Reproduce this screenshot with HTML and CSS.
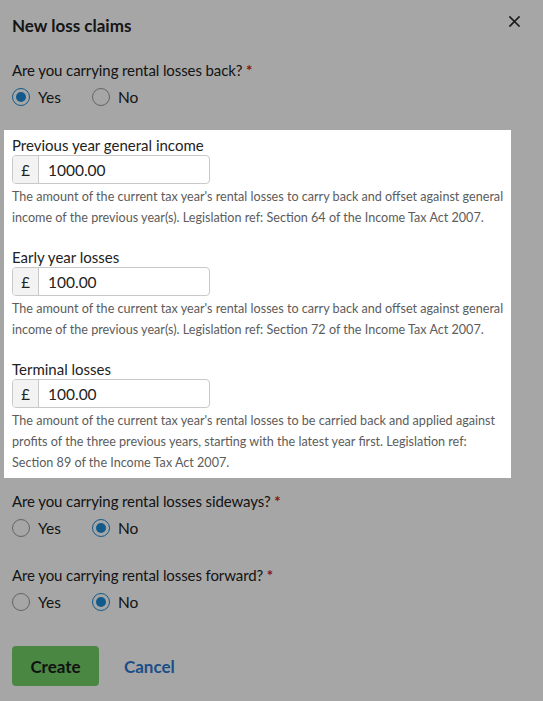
FILE: index.html
```html
<!DOCTYPE html>
<html lang="en">
<head>
<meta charset="utf-8">
<title>New loss claims</title>
<link rel="stylesheet" href="styles.css">
</head>
<body>
<div class="modal">
  <div class="modal-header">
    <h2 class="modal-title">New loss claims</h2>
    <button class="close" aria-label="Close">
      <svg width="11" height="11" viewBox="0 0 11 11"><path d="M1 1L10 10M10 1L1 10" stroke="#2a2a2a" stroke-width="1.7" stroke-linecap="square"/></svg>
    </button>
  </div>

  <div class="question">
    <div class="q-label">Are you carrying rental losses back? <span class="req">*</span></div>
    <div class="options">
      <label class="option"><span class="radio checked"></span>Yes</label>
      <label class="option"><span class="radio"></span>No</label>
    </div>
  </div>

  <div class="spotlight">
    <div class="field">
      <div class="f-label">Previous year general income</div>
      <div class="input-group"><span class="prefix">£</span><span class="value">1000.00</span></div>
      <p class="help">The amount of the current tax year's rental losses to carry back and offset against general income of the previous year(s). Legislation ref: Section 64 of the Income Tax Act 2007.</p>
    </div>
    <div class="field">
      <div class="f-label">Early year losses</div>
      <div class="input-group"><span class="prefix">£</span><span class="value">100.00</span></div>
      <p class="help">The amount of the current tax year's rental losses to carry back and offset against general income of the previous year(s). Legislation ref: Section 72 of the Income Tax Act 2007.</p>
    </div>
    <div class="field">
      <div class="f-label">Terminal losses</div>
      <div class="input-group"><span class="prefix">£</span><span class="value">100.00</span></div>
      <p class="help">The amount of the current tax year's rental losses to be carried back and applied against profits of the three previous years, starting with the latest year first. Legislation ref: Section 89 of the Income Tax Act 2007.</p>
    </div>
  </div>

  <div class="question q-side">
    <div class="q-label">Are you carrying rental losses sideways? <span class="req">*</span></div>
    <div class="options">
      <label class="option"><span class="radio"></span>Yes</label>
      <label class="option"><span class="radio checked"></span>No</label>
    </div>
  </div>

  <div class="question q-forward">
    <div class="q-label">Are you carrying rental losses forward? <span class="req">*</span></div>
    <div class="options">
      <label class="option"><span class="radio"></span>Yes</label>
      <label class="option"><span class="radio checked"></span>No</label>
    </div>
  </div>

  <div class="actions">
    <button class="btn-create">Create</button>
    <a class="btn-cancel" href="#">Cancel</a>
  </div>
</div>
</body>
</html>
```

FILE: styles.css
```css
html, body {
  margin: 0;
  padding: 0;
  background: #ffffff;
}
body {
  font-family: Lato, "Open Sans", sans-serif;
  color: #222222;
  width: 543px;
  height: 701px;
  overflow: hidden;
}
.modal {
  padding: 0 12px;
  height: 701px;
  box-sizing: border-box;
}
.modal-header {
  display: flex;
  justify-content: space-between;
  align-items: flex-start;
  padding-top: 15px;
}
.modal-title {
  margin: 0;
  font-size: 17px;
  font-weight: 700;
  line-height: 22px;
  color: #222222;
}
.close {
  border: 0;
  background: none;
  padding: 0;
  margin: 1px 11px 0 0;
  width: 11px;
  height: 11px;
  display: flex;
}
.question {
  margin-top: 23px;
}
.q-label {
  font-size: 15px;
  line-height: 20px;
  letter-spacing: -0.1px;
}
.req {
  color: #d11a1a;
  font-weight: 700;
}
.options {
  display: flex;
  margin-top: 8px;
}
.option {
  width: 80px;
  display: flex;
  align-items: center;
  gap: 8px;
  font-size: 15.5px;
  line-height: 18px;
}
.radio {
  width: 18px;
  height: 18px;
  box-sizing: border-box;
  border: 1px solid #9a9a9a;
  border-radius: 50%;
  background: #ffffff;
  display: inline-flex;
  align-items: center;
  justify-content: center;
  flex: none;
}
.radio.checked {
  border: 1.5px solid #1d8bd6;
}
.radio.checked::after {
  content: "";
  width: 10px;
  height: 10px;
  border-radius: 50%;
  background: #1d8bd6;
}
.spotlight {
  position: relative;
  z-index: 1;
  background: #ffffff;
  margin: 24px 20px 0 -8px;
  padding: 5px 0 5px 8px;
  box-shadow: 0 0 0 2000px rgba(0, 0, 0, 0.35);
}
.field + .field {
  margin-top: 19px;
}
.f-label {
  font-size: 15px;
  line-height: 20px;
  color: #222222;
}
.input-group {
  display: flex;
  width: 198px;
  height: 29px;
  box-sizing: border-box;
  border: 1px solid #c9c9c9;
  border-radius: 4px;
  overflow: hidden;
}
.prefix {
  width: 25px;
  flex: none;
  background: #f3f3f3;
  border-right: 1px solid #c9c9c9;
  display: flex;
  align-items: center;
  justify-content: center;
  font-size: 15px;
  color: #222222;
}
.value {
  display: flex;
  align-items: center;
  padding-left: 9px;
  font-size: 15.5px;
  color: #222222;
}
.help {
  margin: 2px 0 0;
  font-size: 12.6px;
  line-height: 21px;
  color: #5c5c5c;
  padding-right: 4px;
}
.q-side {
  margin-top: 13px;
}
.q-forward {
  margin-top: 28px;
}
.actions {
  display: flex;
  align-items: center;
  gap: 25px;
  margin-top: 35px;
}
.btn-create {
  width: 87px;
  height: 40px;
  border: 0;
  border-radius: 4px;
  background: #72cf68;
  font-family: inherit;
  font-size: 17px;
  font-weight: 700;
  color: #1a1a1a;
  padding: 0;
}
.btn-cancel {
  font-size: 17px;
  font-weight: 700;
  color: #2b79d0;
  text-decoration: none;
}
```
